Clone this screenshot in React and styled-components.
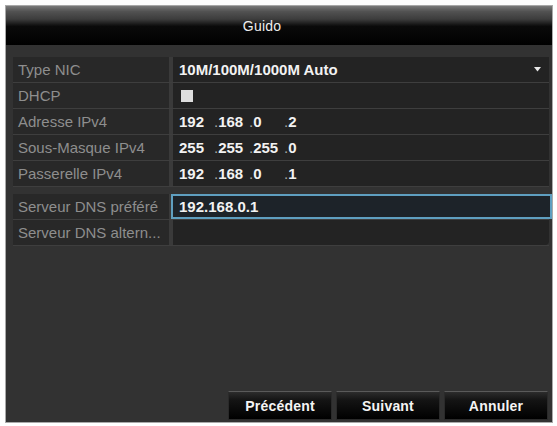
import React from "react";
import styled, { createGlobalStyle } from "styled-components";

const Global = createGlobalStyle`
  html, body {
    margin: 0;
    padding: 0;
    background: #ffffff;
  }
  body {
    font-family: "Liberation Sans", Arial, sans-serif;
  }
`;

const Page = styled.div`
  padding: 5px 4px 3px 5px;
  width: 557px;
  height: 426px;
  box-sizing: border-box;
`;

const Window = styled.div`
  display: flex;
  flex-direction: column;
  height: 100%;
  box-sizing: border-box;
  border: 1px solid #a9a9a9;
  background: #323232;
`;

const TitleBar = styled.div`
  height: 39px;
  display: flex;
  align-items: center;
  justify-content: center;
  padding-right: 34px;
  background: linear-gradient(
    #7a7a7a 0,
    #525252 14%,
    #3c3c3c 34%,
    #0a0a0a 52%,
    #000 100%
  );
  color: #eeeeee;
  font-size: 14px;
  letter-spacing: 0.2px;
`;

const Body = styled.div`
  flex: 1;
  display: flex;
  flex-direction: column;
  padding: 12px 3px 2px 7px;
`;

const Group = styled.div`
  display: flex;
  flex-direction: column;
  margin-bottom: ${(p) => p.$gap || 0}px;
`;

const Row = styled.div`
  display: grid;
  grid-template-columns: 160px 1fr;
  height: 26px;
  border-bottom: 1px solid #3e3e3e;
  box-sizing: border-box;
`;

const Label = styled.div`
  display: flex;
  align-items: center;
  padding-left: 5px;
  background: #282828;
  border-right: 4px solid #3a3a3a;
  color: #8e8e8e;
  font-size: 15px;
  white-space: nowrap;
  overflow: hidden;
`;

const Value = styled.div`
  display: flex;
  align-items: center;
  justify-content: space-between;
  padding: 0 8px 0 6px;
  background: ${(p) => (p.$focused ? "#1d2329" : "#232323")};
  border: ${(p) => (p.$focused ? "2px solid #5f9fc0" : "none")};
  margin-left: ${(p) => (p.$focused ? "-2px" : "0")};
  margin-right: ${(p) => (p.$focused ? "-3px" : "0")};
  color: #f2f2f2;
  font-size: 15px;
  font-weight: bold;
  border-radius: ${(p) => (p.$last ? "0 0 4px 0" : "0")};
`;

const Segment = styled.span`
  display: inline-block;
  width: 35px;
`;

const Dot = styled.span`
  color: #a8a8a8;
  font-weight: normal;
`;

const Checkbox = styled.span`
  width: 12px;
  height: 12px;
  background: #dedede;
  margin-left: 2px;
`;

const Spacer = styled.div`
  flex: 1;
`;

const ButtonBar = styled.div`
  display: flex;
  justify-content: flex-end;
  gap: 4px;
  padding-right: 1px;
`;

const Button = styled.button`
  width: 104px;
  height: 29px;
  border: 1px solid #2a2a2a;
  border-top: 1px solid #5a5a5a;
  background: linear-gradient(#2c2c2c 0, #141414 30%, #000 100%);
  color: #f4f4f4;
  font-family: "Liberation Sans", Arial, sans-serif;
  font-size: 14px;
  font-weight: bold;
  letter-spacing: 0.2px;
  padding: 0;
`;

const IpAddress = ({ parts }) => (
  <span>
    {parts.map((part, i) => (
      <Segment key={i}>
        {i > 0 && <Dot>.</Dot>}
        {part}
      </Segment>
    ))}
  </span>
);

const Arrow = () => (
  <svg width="7" height="5" viewBox="0 0 7 5">
    <path d="M0 0 H7 L3.5 4.5 Z" fill="#e8e8e8" />
  </svg>
);

const App = () => {
  return (
    <>
      <Global />
      <Page>
        <Window>
          <TitleBar>Guido</TitleBar>
          <Body>
            <Group $gap={7}>
              <Row>
                <Label>Type NIC</Label>
                <Value>
                  <span>10M/100M/1000M Auto</span>
                  <Arrow />
                </Value>
              </Row>
              <Row>
                <Label>DHCP</Label>
                <Value>
                  <Checkbox />
                </Value>
              </Row>
              <Row>
                <Label>Adresse IPv4</Label>
                <Value>
                  <IpAddress parts={["192", "168", "0", "2"]} />
                </Value>
              </Row>
              <Row>
                <Label>Sous-Masque IPv4</Label>
                <Value>
                  <IpAddress parts={["255", "255", "255", "0"]} />
                </Value>
              </Row>
              <Row>
                <Label>Passerelle IPv4</Label>
                <Value>
                  <IpAddress parts={["192", "168", "0", "1"]} />
                </Value>
              </Row>
            </Group>
            <Group>
              <Row>
                <Label>Serveur DNS préféré</Label>
                <Value $focused>192.168.0.1</Value>
              </Row>
              <Row>
                <Label>Serveur DNS altern...</Label>
                <Value $last />
              </Row>
            </Group>
            <Spacer />
            <ButtonBar>
              <Button>Précédent</Button>
              <Button>Suivant</Button>
              <Button>Annuler</Button>
            </ButtonBar>
          </Body>
        </Window>
      </Page>
    </>
  );
};

export default App;
